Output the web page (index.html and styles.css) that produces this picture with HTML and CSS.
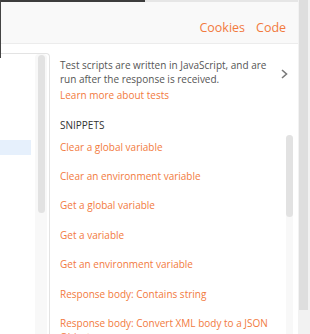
FILE: index.html
```html
<!DOCTYPE html>
<html lang="en">
<head>
    <meta charset="UTF-8">
    <meta name="viewport" content="width=device-width, initial-scale=1.0">
    <title>Tests</title>
    <link rel="stylesheet" href="styles.css">
</head>
<body>
    <div class="edge"></div>
    <div class="app">
        <div class="main">
            <div class="topline">
                <div class="topline-active"></div>
            </div>
            <div class="header">
                <a href="#">Cookies</a>
                <a href="#">Code</a>
            </div>

            <div class="workspace">
                <div class="editor">
                    <div class="editor-lines">
                        <div class="line selected"></div>
                    </div>
                    <div class="scroll editor-scroll">
                        <div class="thumb"></div>
                    </div>
                </div>

                <div class="sidebar">
                    <div class="intro">
                        <div class="intro-text">
                            <p class="desc">Test scripts are written in JavaScript, and are run after the response is received.</p>
                            <a class="learn" href="#">Learn more about tests</a>
                        </div>
                        <span class="chevron">
                            <svg width="7" height="10" viewBox="0 0 7 10"><path d="M1 1 L5.5 5 L1 9" fill="none" stroke="#7a7a7a" stroke-width="1.6"/></svg>
                        </span>
                    </div>
                    <div class="snippets-title">SNIPPETS</div>
                    <div class="snippets">
                        <div class="snippet-list">
                            <a href="#">Clear a global variable</a>
                            <a href="#">Clear an environment variable</a>
                            <a href="#">Get a global variable</a>
                            <a href="#">Get a variable</a>
                            <a href="#">Get an environment variable</a>
                            <a href="#">Response body: Contains string</a>
                            <a href="#">Response body: Convert XML body to a JSON Object</a>
                        </div>
                        <div class="scroll snippet-scroll">
                            <div class="thumb"></div>
                        </div>
                    </div>
                </div>
            </div>
        </div>
        <div class="page-scroll">
            <div class="page-thumb"></div>
        </div>
    </div>
</body>
</html>
```

FILE: styles.css
```css
body {
    font-family: "Open Sans", Arial, sans-serif;
    background-color: white;
    margin: 0;
    padding: 0;
    width: 310px;
    height: 334px;
    overflow: hidden;
    position: relative;
}
a {
    text-decoration: none;
    color: #f27a3d;
}
.edge {
    position: absolute;
    left: 0;
    top: 0;
    width: 1px;
    height: 58px;
    background-color: #444;
}
.app {
    display: flex;
    height: 334px;
}
.main {
    width: 301px;
    display: flex;
    flex-direction: column;
}
.topline {
    height: 2px;
    flex-shrink: 0;
    background-color: #e6e6e6;
}
.topline-active {
    width: 145px;
    height: 2px;
    background-color: #3d3d3d;
}
.header {
    height: 42px;
    flex-shrink: 0;
    background-color: #f9f9f9;
    border-bottom: 1px solid #ececec;
    display: flex;
    justify-content: flex-end;
    align-items: center;
    gap: 11px;
    padding: 9px 12px 0 0;
    box-sizing: border-box;
    font-size: 12.5px;
}
.workspace {
    display: flex;
    flex: 1;
    min-height: 0;
    overflow: hidden;
    margin-top: 9px;
}
.editor {
    width: 49px;
    border: 1px solid #e3e3e3;
    border-left: none;
    border-bottom: none;
    border-top-right-radius: 4px;
    display: flex;
}
.editor-lines {
    width: 35px;
    padding-top: 86px;
}
.line {
    height: 15px;
    width: 31px;
}
.line.selected {
    background-color: #e6f0fc;
}
.scroll {
    background-color: #f8f8f8;
    border-radius: 4px 4px 0 0;
}
.thumb {
    background-color: #e2e2e2;
    border-radius: 4px;
}
.editor-scroll {
    width: 12px;
    padding: 1px 2px 0 3px;
    box-sizing: border-box;
}
.editor-scroll .thumb {
    height: 158px;
}
.sidebar {
    flex: 1;
    padding: 5px 5px 0 10px;
    font-size: 10px;
}
.intro {
    display: flex;
}
.intro-text {
    width: 217px;
}
.desc {
    margin: 0;
    line-height: 14px;
    color: #555;
}
.learn {
    display: block;
    margin-top: 2px;
    line-height: 14px;
}
.chevron {
    padding: 10px 0 0 4px;
}
.snippets-title {
    margin-top: 16px;
    line-height: 14px;
    color: #333;
}
.snippets {
    display: flex;
}
.snippet-list {
    flex: 1;
}
.snippet-list a {
    display: block;
    line-height: 14px;
    padding: 7.7px 0;
}
.snippet-scroll {
    width: 7px;
    margin-top: 3px;
}
.snippet-scroll .thumb {
    height: 82px;
}
.page-scroll {
    width: 9px;
    background-color: #f2f2f2;
    padding: 0 2px 0 1px;
}
.page-thumb {
    height: 310px;
    background-color: #dedede;
}
```
